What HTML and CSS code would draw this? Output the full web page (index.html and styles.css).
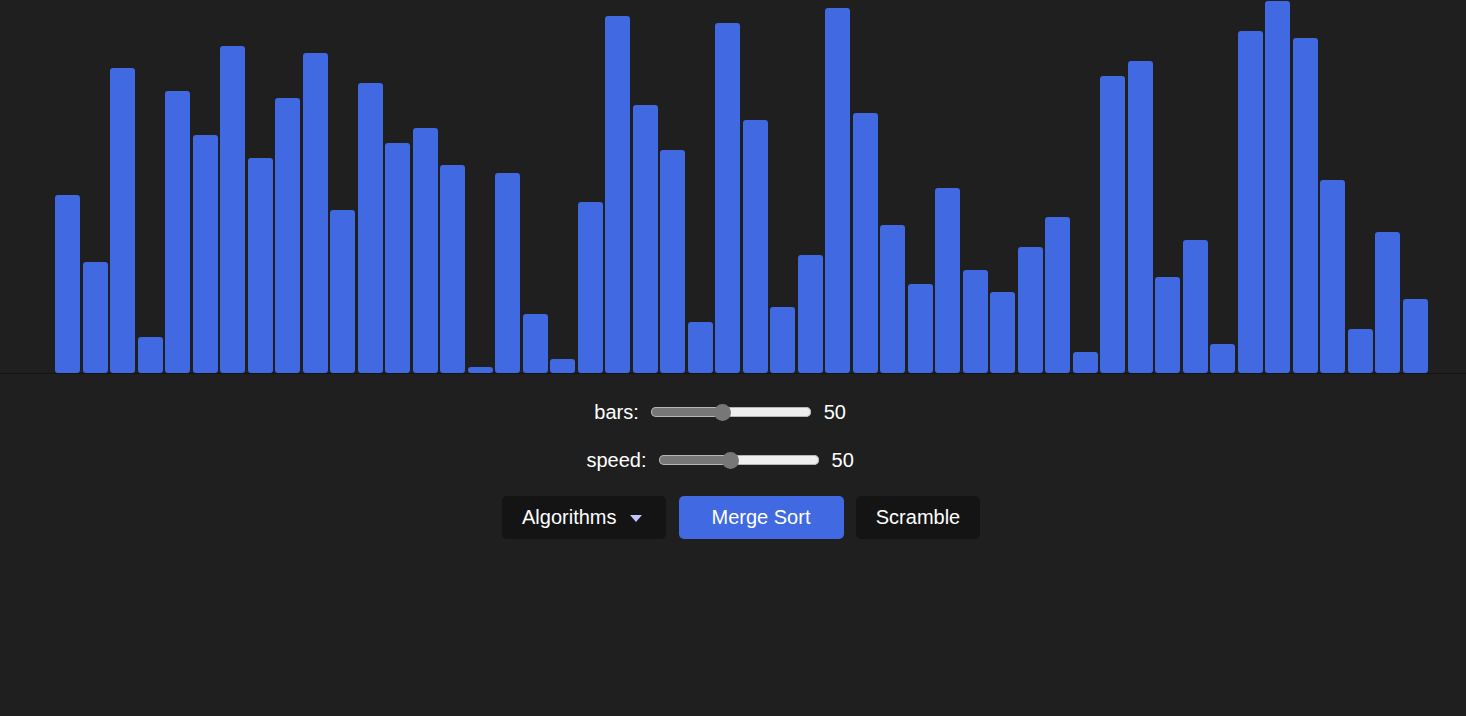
FILE: index.html
```html
<!DOCTYPE html>
<html lang="en">
<head>
<meta charset="utf-8">
<title>Sorting Visualizer</title>
<link rel="stylesheet" href="styles.css">
</head>
<body>
<div class="app">
  <div class="bars">
    <div class="bar" style="height:178px"></div>
    <div class="bar" style="height:111px"></div>
    <div class="bar" style="height:305px"></div>
    <div class="bar" style="height:36px"></div>
    <div class="bar" style="height:282px"></div>
    <div class="bar" style="height:238px"></div>
    <div class="bar" style="height:327px"></div>
    <div class="bar" style="height:215px"></div>
    <div class="bar" style="height:275px"></div>
    <div class="bar" style="height:320px"></div>
    <div class="bar" style="height:163px"></div>
    <div class="bar" style="height:290px"></div>
    <div class="bar" style="height:230px"></div>
    <div class="bar" style="height:245px"></div>
    <div class="bar" style="height:208px"></div>
    <div class="bar" style="height:6px"></div>
    <div class="bar" style="height:200px"></div>
    <div class="bar" style="height:59px"></div>
    <div class="bar" style="height:14px"></div>
    <div class="bar" style="height:171px"></div>
    <div class="bar" style="height:357px"></div>
    <div class="bar" style="height:268px"></div>
    <div class="bar" style="height:223px"></div>
    <div class="bar" style="height:51px"></div>
    <div class="bar" style="height:350px"></div>
    <div class="bar" style="height:253px"></div>
    <div class="bar" style="height:66px"></div>
    <div class="bar" style="height:118px"></div>
    <div class="bar" style="height:365px"></div>
    <div class="bar" style="height:260px"></div>
    <div class="bar" style="height:148px"></div>
    <div class="bar" style="height:89px"></div>
    <div class="bar" style="height:185px"></div>
    <div class="bar" style="height:103px"></div>
    <div class="bar" style="height:81px"></div>
    <div class="bar" style="height:126px"></div>
    <div class="bar" style="height:156px"></div>
    <div class="bar" style="height:21px"></div>
    <div class="bar" style="height:297px"></div>
    <div class="bar" style="height:312px"></div>
    <div class="bar" style="height:96px"></div>
    <div class="bar" style="height:133px"></div>
    <div class="bar" style="height:29px"></div>
    <div class="bar" style="height:342px"></div>
    <div class="bar" style="height:372px"></div>
    <div class="bar" style="height:335px"></div>
    <div class="bar" style="height:193px"></div>
    <div class="bar" style="height:44px"></div>
    <div class="bar" style="height:141px"></div>
    <div class="bar" style="height:74px"></div>
  </div>
  <div class="controls">
    <div class="row">
      <label class="label" for="bars">bars:</label>
      <input class="slider" id="bars" type="range" min="10" max="100" value="50">
      <span class="value">50</span>
    </div>
    <div class="row">
      <label class="label" for="speed">speed:</label>
      <input class="slider" id="speed" type="range" min="10" max="100" value="50">
      <span class="value">50</span>
    </div>
    <div class="buttons">
      <button class="btn btn-dark btn-algo">Algorithms
        <svg class="caret" width="12" height="8" viewBox="0 0 12 8"><polygon points="0,0 12,0 6,7" fill="#c3c3ff"/></svg>
      </button>
      <button class="btn btn-primary">Merge Sort</button>
      <button class="btn btn-dark btn-scramble">Scramble</button>
    </div>
  </div>
</div>
</body>
</html>
```
FILE: styles.css
```css
html, body {
  margin: 0;
  padding: 0;
  background: #1f1f1f;
  height: 100%;
}
body {
  font-family: "Liberation Sans", Arial, sans-serif;
  color: #ffffff;
  overflow: hidden;
}
.app {
  display: flex;
  flex-direction: column;
}
.bars {
  height: 373px;
  display: flex;
  align-items: flex-end;
  gap: 2.5px;
  padding-left: 55px;
  border-bottom: 1px solid #141414;
}
.bar {
  width: 25px;
  flex: 0 0 25px;
  background: #4169e1;
  border-radius: 3px;
}
.controls {
  margin-left: 16px;
  padding-top: 26px;
  display: flex;
  flex-direction: column;
  align-items: center;
  gap: 24px;
}
.row {
  display: flex;
  align-items: center;
  height: 24px;
  font-size: 20px;
  line-height: 23px;
}
.label {
  margin-right: 12px;
}
.slider {
  -webkit-appearance: none;
  appearance: none;
  width: 160px;
  height: 17px;
  margin: 0;
  background: transparent;
}
.slider::-webkit-slider-runnable-track {
  height: 10px;
  border-radius: 5px;
  background: linear-gradient(to right, #777777 0, #777777 73px, #efefef 73px, #efefef 100%);
  box-shadow: inset 0 0 0 1px #b5b5b5;
}
.slider::-webkit-slider-thumb {
  -webkit-appearance: none;
  appearance: none;
  width: 17px;
  height: 17px;
  border-radius: 50%;
  background: #777777;
  margin-top: -3.5px;
  border: none;
}
.value {
  margin-left: 13px;
  width: 64px;
}
.buttons {
  display: flex;
  gap: 12.5px;
  margin-top: 0;
}
.btn {
  height: 43px;
  border: none;
  border-radius: 5px;
  font-family: "Liberation Sans", Arial, sans-serif;
  font-size: 20px;
  color: #ffffff;
  padding: 0 20px;
  display: flex;
  align-items: center;
  justify-content: center;
}
.btn-dark {
  background: #141414;
}
.btn-primary {
  background: #4169e1;
  width: 165px;
}
.btn-algo {
  width: 164px;
  justify-content: flex-start;
}
.btn-scramble {
  width: 124px;
}
.caret {
  margin-left: 14px;
  margin-top: 2px;
}
```
